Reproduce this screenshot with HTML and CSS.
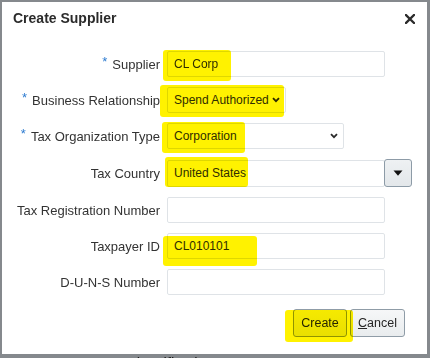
FILE: index.html
```html
<!DOCTYPE html>
<html>
<head>
<meta charset="utf-8">
<link rel="stylesheet" href="styles.css">
</head>
<body>
<div class="screen">
  <div class="dialog">
    <div class="header">
      <h1 class="title">Create Supplier</h1>
      <svg class="close" width="10" height="10" viewBox="0 0 10 10"><path d="M1 1L9 9M9 1L1 9" stroke="#2b2b2b" stroke-width="2.3" stroke-linecap="square"/></svg>
    </div>
    <div class="form">
      <label class="label"><span class="req">*</span>Supplier</label>
      <div class="field">
        <div class="input w-supplier">CL Corp</div>
        <span class="hl hl-supplier"></span>
      </div>

      <label class="label"><span class="req">*</span>Business Relationship</label>
      <div class="field">
        <div class="input select w-business">Spend Authorized
          <svg class="chev" width="8" height="6" viewBox="0 0 8 6"><path d="M1 1.2L4 4.2L7 1.2" fill="none" stroke="#2b2b2b" stroke-width="1.8"/></svg>
        </div>
        <span class="hl hl-business"></span>
      </div>

      <label class="label"><span class="req">*</span>Tax Organization Type</label>
      <div class="field">
        <div class="input select w-taxorg">Corporation
          <svg class="chev" width="8" height="6" viewBox="0 0 8 6"><path d="M1 1.2L4 4.2L7 1.2" fill="none" stroke="#2b2b2b" stroke-width="1.8"/></svg>
        </div>
        <span class="hl hl-taxorg"></span>
      </div>

      <label class="label">Tax Country</label>
      <div class="field combo">
        <div class="input w-country">United States</div>
        <button class="drop"><svg width="10" height="6" viewBox="0 0 10 6"><path d="M0.5 0.5H9.5L5 5.8Z" fill="#111"/></svg></button>
        <span class="hl hl-country"></span>
      </div>

      <label class="label">Tax Registration Number</label>
      <div class="field">
        <div class="input w-supplier"></div>
      </div>

      <label class="label">Taxpayer ID</label>
      <div class="field">
        <div class="input w-supplier">CL010101</div>
        <span class="hl hl-taxpayer"></span>
      </div>

      <label class="label">D-U-N-S Number</label>
      <div class="field">
        <div class="input w-supplier"></div>
      </div>
    </div>
    <div class="actions">
      <div class="field">
        <button class="btn btn-create">Create</button>
        <span class="hl hl-create"></span>
      </div>
      <button class="btn"><u>C</u>ancel</button>
    </div>
  </div>
  <div class="behind">Classification</div>
</div>
</body>
</html>
```

FILE: styles.css
```css
* { box-sizing: border-box; }
html, body { margin: 0; padding: 0; }
body {
  width: 430px;
  height: 358px;
  overflow: hidden;
  background: #85898d;
  font-family: "Liberation Sans", Arial, sans-serif;
}
.screen {
  width: 430px;
  height: 358px;
  overflow: hidden;
  padding: 2px 3px 0 2px;
}
.dialog {
  position: relative;
  width: 425px;
  height: 352px;
  background: #ffffff;
  padding-top: 7px;
}
.header {
  display: flex;
  justify-content: space-between;
  align-items: center;
  padding: 0 12px 0 11px;
  height: 18px;
}
.title {
  margin: 0;
  font-size: 14px;
  line-height: 18px;
  font-weight: bold;
  color: #2b2b2b;
}
.close { display: block; margin-top: 2px; }

.form {
  margin-top: 24px;
  display: grid;
  grid-template-columns: 158px auto;
  column-gap: 7px;
  row-gap: 10px;
  align-items: center;
}
.label {
  text-align: right;
  font-size: 13px;
  color: #333333;
  white-space: nowrap;
}
.req {
  color: #2d7bd0;
  font-size: 13px;
  position: relative;
  top: -3px;
  margin-right: 5px;
}
.field {
  position: relative;
  display: flex;
  align-items: center;
}
.input {
  height: 26px;
  border: 1px solid #dfe3e7;
  border-radius: 2px;
  background: #fff;
  font-size: 12px;
  color: #2f2f2f;
  line-height: 24px;
  padding-left: 6px;
  white-space: nowrap;
}
.select {
  display: flex;
  align-items: center;
  justify-content: space-between;
  padding-right: 5px;
}
.chev { display: block; }
.w-supplier { width: 218px; }
.w-business { width: 119px; }
.w-taxorg { width: 177px; }
.w-country { width: 218px; height: 27px; line-height: 25px; }
.drop {
  margin-left: -1px;
  width: 28px;
  height: 28px;
  border: 1px solid #8d9ba7;
  border-radius: 3px;
  background: linear-gradient(#eef1f3, #e3e7ea);
  display: flex;
  align-items: center;
  justify-content: center;
  padding: 0;
}
.drop svg { display: block; }

.actions {
  margin-top: 14px;
  display: flex;
  justify-content: flex-end;
  gap: 3px;
  padding-right: 22px;
}
.btn {
  height: 28px;
  padding: 0;
  width: 55px;
  border: 1px solid #8f9ca7;
  border-radius: 3px;
  background: linear-gradient(#f6f7f8, #e9ecee);
  font-family: "Liberation Sans", Arial, sans-serif;
  font-size: 12.5px;
  color: #262626;
}
.btn-create { width: 54px; }

.hl {
  position: absolute;
  background: #fff200;
  mix-blend-mode: multiply;
  border-radius: 3px;
  pointer-events: none;
}
.hl-supplier { left: -4px; top: -1px; width: 68px; height: 31px; }
.hl-business { left: -7px; top: -2px; width: 124px; height: 32px; }
.hl-taxorg { left: -5px; top: -1px; width: 83px; height: 31px; }
.hl-country { left: -2px; top: -2px; width: 83px; height: 30px; }
.hl-taxpayer { left: -4px; top: 3px; width: 94px; height: 30px; }
.hl-create { left: -8px; top: 1px; width: 68px; height: 32px; }

.behind {
  margin-top: 1px;
  padding-left: 124px;
  font-size: 15px;
  line-height: 16px;
  color: #1a1a1a;
}
```
